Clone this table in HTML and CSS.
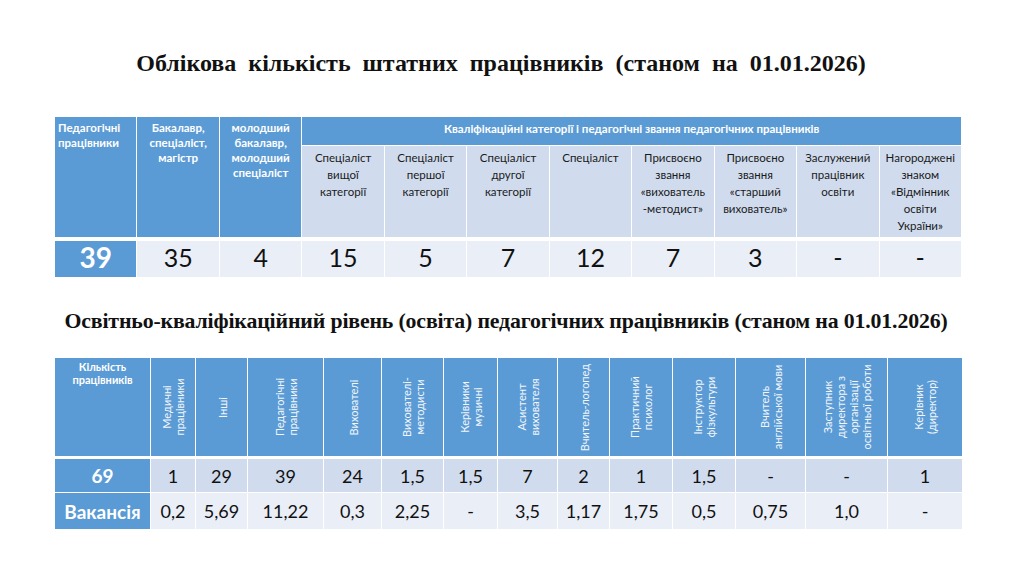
FILE: index.html
```html
<!DOCTYPE html>
<html lang="uk">
<head>
<meta charset="utf-8">
<title>Облікова кількість штатних працівників</title>
<link rel="stylesheet" href="styles.css">
</head>
<body>
<div class="page">
  <h1 class="title1">Облікова кількість штатних працівників (станом на 01.01.2026)</h1>
  <table class="t1">
    <colgroup>
      <col><col><col><col><col><col><col><col><col><col><col>
    </colgroup>
    <tr class="h1row">
      <th rowspan="2" class="hd left">Педагогічні<br>працівники</th>
      <th rowspan="2" class="hd">Бакалавр,<br>спеціаліст,<br>магістр</th>
      <th rowspan="2" class="hd">молодший<br>бакалавр,<br>молодший<br>спеціаліст</th>
      <th colspan="8" class="hd span">Кваліфікаційні категорії і педагогічні звання педагогічних працівників</th>
    </tr>
    <tr class="h2row">
      <td class="sub">Спеціаліст<br>вищої<br>категорії</td>
      <td class="sub">Спеціаліст<br>першої<br>категорії</td>
      <td class="sub">Спеціаліст<br>другої<br>категорії</td>
      <td class="sub">Спеціаліст</td>
      <td class="sub">Присвоєно<br>звання<br>«вихователь<br>-методист»</td>
      <td class="sub">Присвоєно<br>звання<br>«старший<br>вихователь»</td>
      <td class="sub">Заслужений<br>працівник<br>освіти</td>
      <td class="sub">Нагороджені<br>знаком<br>«Відмінник<br>освіти<br>України»</td>
    </tr>
    <tr class="drow">
      <td class="first">39</td>
      <td>35</td><td>4</td><td>15</td><td>5</td><td>7</td><td>12</td><td>7</td><td>3</td><td>-</td><td>-</td>
    </tr>
  </table>

  <h2 class="title2">Освітньо-кваліфікаційний рівень (освіта) педагогічних працівників (станом на 01.01.2026)</h2>
  <table class="t2">
    <colgroup>
      <col style="width:96px"><col style="width:45px"><col style="width:52px"><col style="width:76px"><col style="width:58px"><col style="width:62px"><col style="width:54px"><col style="width:60px"><col style="width:52px"><col style="width:63px"><col style="width:63px"><col style="width:70px"><col style="width:82px"><col style="width:75px">
    </colgroup>
    <tr class="hrow">
      <th class="hd top">Кількість<br>працівників</th>
      <th class="rot"><div class="rw"><span>Медичні<br>працівники</span></div></th>
      <th class="rot"><div class="rw"><span>Інші</span></div></th>
      <th class="rot"><div class="rw"><span>Педагогічні<br>працівники</span></div></th>
      <th class="rot"><div class="rw"><span>Вихователі</span></div></th>
      <th class="rot"><div class="rw"><span>Вихователі-<br>методисти</span></div></th>
      <th class="rot"><div class="rw"><span>Керівники<br>музичні</span></div></th>
      <th class="rot"><div class="rw"><span>Асистент<br>вихователя</span></div></th>
      <th class="rot"><div class="rw"><span>Вчитель-логопед</span></div></th>
      <th class="rot"><div class="rw"><span>Практичний<br>психолог</span></div></th>
      <th class="rot"><div class="rw"><span>Інструктор<br>фізкультури</span></div></th>
      <th class="rot"><div class="rw"><span>Вчитель<br>англійської мови</span></div></th>
      <th class="rot"><div class="rw"><span>Заступник<br>директора з<br>організації<br>освітньої роботи</span></div></th>
      <th class="rot"><div class="rw"><span>Керівник<br>(директор)</span></div></th>
    </tr>
    <tr class="r1">
      <td class="first">69</td>
      <td>1</td><td>29</td><td>39</td><td>24</td><td>1,5</td><td>1,5</td><td>7</td><td>2</td><td>1</td><td>1,5</td><td>-</td><td>-</td><td>1</td>
    </tr>
    <tr class="r2">
      <td class="first">Вакансія</td>
      <td>0,2</td><td>5,69</td><td>11,22</td><td>0,3</td><td>2,25</td><td>-</td><td>3,5</td><td>1,17</td><td>1,75</td><td>0,5</td><td>0,75</td><td>1,0</td><td>-</td>
    </tr>
  </table>
</div>
</body>
</html>
```

FILE: styles.css
```css
html, body {
  margin: 0;
  padding: 0;
  background: #ffffff;
}

.page {
  width: 1024px;
  height: 576px;
  display: flex;
  flex-direction: column;
  align-items: flex-start;
  overflow: hidden;
}

.title1 {
  font-family: "Liberation Serif", "Times New Roman", serif;
  font-weight: bold;
  font-size: 24px;
  line-height: 30px;
  word-spacing: 6px;
  color: #111;
  margin: 48px 0 0 0;
  width: 1024px;
  text-align: center;
  padding-right: 22px;
  box-sizing: border-box;
}

.title2 {
  font-family: "Liberation Serif", "Times New Roman", serif;
  font-weight: bold;
  font-size: 21.8px;
  line-height: 26px;
  letter-spacing: -0.15px;
  color: #111;
  margin: 30px 0 0 0;
  width: 1024px;
  text-align: center;
  padding-right: 12px;
  box-sizing: border-box;
}

table {
  border-collapse: collapse;
  table-layout: fixed;
  margin-left: 54px;
  width: 908px;
  font-family: Lato, "Open Sans", "DejaVu Sans", sans-serif;
}

td, th {
  border: 1px solid #ffffff;
  padding: 0;
  text-align: center;
  color: #111;
}

.t1 {
  margin-top: 38px;
}

.hd {
  background: #5b9bd5;
  color: #ffffff;
  font-weight: bold;
  font-size: 11.5px;
  line-height: 15px;
  vertical-align: top;
  padding-top: 3px;
}

.hd.left {
  text-align: left;
  padding-left: 3px;
}

.t1 .h1row {
  height: 29px;
}

.t1 .h1row .hd.span {
  padding-top: 4px;
  border-bottom: none;
}

.t1 .h2row {
  height: 93px;
}

.sub {
  background: #d0dcee;
  font-size: 11.5px;
  line-height: 17px;
  vertical-align: top;
  padding-top: 3px;
  color: #1a1a1a;
  border-bottom: 4px solid #ffffff;
}

.t1 .h1row .hd[rowspan] {
  border-bottom: 4px solid #ffffff;
}

.t1 .drow {
  height: 39px;
}

.t1 .drow td {
  background: #e9eef7;
  font-size: 25px;
  line-height: 28px;
  vertical-align: middle;
  padding-bottom: 4px;
}

.t1 .drow td.first {
  background: #5b9bd5;
  color: #ffffff;
  font-weight: bold;
  font-size: 28px;
}

.t2 {
  margin-top: 23px;
}

.t2 .hrow {
  height: 100px;
}

.t2 .hrow th {
  border-bottom: 3px solid #ffffff;
}

.t2 .hd.top {
  font-size: 11px;
  line-height: 13px;
  padding-top: 2px;
}

.rot {
  background: #5b9bd5;
  color: #f2f6fb;
  font-weight: normal;
  font-size: 11px;
  line-height: 13px;
  vertical-align: middle;
  overflow: hidden;
}

.rw {
  height: 96px;
  display: flex;
  align-items: center;
  justify-content: center;
}

.rw span {
  flex: none;
  width: 94px;
  text-align: center;
  white-space: nowrap;
  transform: rotate(-90deg);
}

.t2 .r1 {
  height: 35px;
}

.t2 .r2 {
  height: 37px;
}

.t2 .r1 td {
  background: #d0dcee;
  font-size: 18px;
  vertical-align: middle;
}

.t2 .r2 td {
  background: #e9eef7;
  font-size: 18px;
  vertical-align: middle;
}

.t2 td.first {
  background: #5b9bd5;
  color: #ffffff;
  font-weight: bold;
  font-size: 19px;
}
```
